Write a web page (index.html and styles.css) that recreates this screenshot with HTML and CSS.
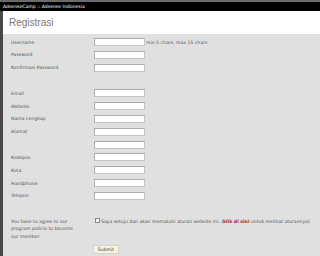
FILE: index.html
```html
<!DOCTYPE html>
<html lang="en">
<head>
  <meta charset="UTF-8">
  <title>Registrasi</title>
  <link rel="stylesheet" href="styles.css">
</head>
<body>
  <div class="topbar">AdsenseCamp :: Adsense Indonesia</div>
  <div class="page">
    <div class="title">Registrasi</div>
    <div class="content">
      <form class="form">
        <label>Username</label>
        <div class="field"><input type="text"><span class="hint">min 5 chars, max 15 chars</span></div>
        <label>Password</label>
        <div class="field"><input type="password"></div>
        <label>Konfirmasi Password</label>
        <div class="field"><input type="password"></div>
        <label></label>
        <div class="field"></div>
        <label>Email</label>
        <div class="field"><input type="text"></div>
        <label>Website</label>
        <div class="field"><input type="text"></div>
        <label>Nama Lengkap</label>
        <div class="field"><input type="text"></div>
        <label>Alamat</label>
        <div class="field"><input type="text"></div>
        <label></label>
        <div class="field"><input type="text"></div>
        <label>Kodepos</label>
        <div class="field"><input type="text"></div>
        <label>Kota</label>
        <div class="field"><input type="text"></div>
        <label>Handphone</label>
        <div class="field"><input type="text"></div>
        <label>Telepon</label>
        <div class="field"><input type="text"></div>
      </form>

      <div class="agree">
        <p class="agree-note">You have to agree to our program policie to become our member.</p>
        <div class="agree-box">
          <input type="checkbox" class="check">
          <span>Saya setuju dan akan mematuhi aturan website ini. (<a href="#" class="rules">klik di sini</a> untuk melihat aturannya)</span>
        </div>
      </div>

      <div class="actions">
        <button type="button" class="submit">Submit</button>
      </div>
    </div>
  </div>
</body>
</html>
```

FILE: styles.css
```css
body {
  margin: 0;
  font-family: "DejaVu Sans", Verdana, sans-serif;
  background-color: #e0e0e0;
  color: #555;
  height: 256px;
  overflow: hidden;
}

.topbar {
  background-color: #000;
  border-top: 2px solid #6a6a6a;
  height: 9px;
  line-height: 9px;
  padding-left: 3px;
  font-size: 4.6px;
  color: #fff;
}

.page {
  border-left: 3px solid #484848;
  height: 245px;
}

.title {
  background-color: #fff;
  height: 23px;
  padding-left: 6px;
  font-family: "Liberation Sans", Arial, sans-serif;
  font-size: 10px;
  line-height: 23px;
  color: #777;
}

.content {
  padding: 1.6px 0 0 8px;
}

.form {
  display: grid;
  grid-template-columns: 83px auto;
  grid-auto-rows: 12.83px;
  align-items: center;
  margin: 0;
  font-size: 4.6px;
}

.field {
  display: flex;
  align-items: center;
}

.field input {
  box-sizing: border-box;
  width: 51px;
  height: 8px;
  margin: 0;
  padding: 0;
  border: 1px solid #c4c4c4;
  border-top-color: #aaa;
  border-left-color: #b0b0b0;
  background-color: #fff;
}

.hint {
  margin-left: 1px;
}

.agree {
  display: grid;
  grid-template-columns: 83px auto;
  margin-top: 15.5px;
  font-size: 4.6px;
  line-height: 7.5px;
}

.agree-note {
  margin: 0;
  width: 66px;
}

.agree-box {
  display: flex;
  align-items: flex-start;
}

.check {
  appearance: none;
  box-sizing: border-box;
  width: 5px;
  height: 5px;
  margin: 0.5px 1px 0 1px;
  border: 1px solid #888;
  background-color: #f4f4f4;
}

.rules {
  color: #b01818;
  font-weight: bold;
  text-decoration: none;
}

.actions {
  display: flex;
  margin-top: 5px;
  padding-left: 82px;
}

.submit {
  box-sizing: border-box;
  width: 26px;
  height: 9px;
  padding: 0;
  font-family: "DejaVu Sans", Verdana, sans-serif;
  font-size: 4.6px;
  color: #444;
  background-color: #f3f1e2;
  border: 1px solid #d6d4c4;
}
```
